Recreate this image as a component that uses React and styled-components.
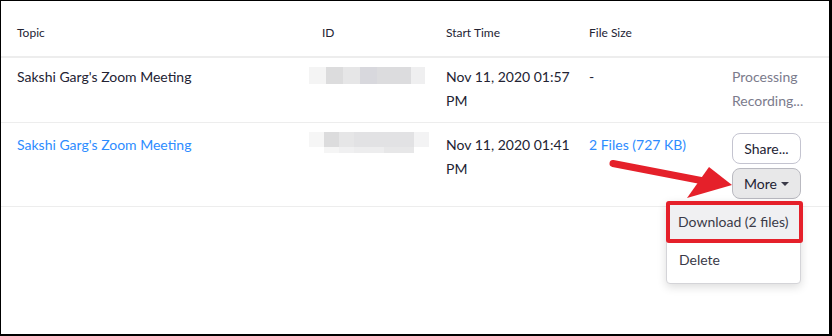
import React from 'react';
import styled, { createGlobalStyle } from 'styled-components';

const GlobalStyle = createGlobalStyle`
  body {
    margin: 0;
    background: #fff;
    font-family: Lato, "Open Sans", sans-serif;
  }
`

const Frame = styled.div`
  position: relative;
  width: 832px;
  height: 336px;
  box-sizing: border-box;
  border-style: solid;
  border-color: #000;
  border-width: 1px 3px 2px 1px;
  background: #fff;
  overflow: hidden;
`

const Row = styled.div`
  display: grid;
  grid-template-columns: 305px 124px 143px 143px 1fr;
  border-bottom: 1px solid #ededed;
`

const HeadRow = styled(Row)`
  height: 55px;
  border-bottom: 2px solid #ededed;
`

const HeadCell = styled.div`
  padding: 24px 0 0 16px;
  font-size: 12px;
  line-height: 16px;
  color: #232333;
`

const Cell = styled.div`
  padding: ${p => (p.$ready ? '10px 0 7px 16px' : '7px 0 9px 16px')};
  font-size: 14px;
  line-height: 24px;
  color: ${p => (p.$link ? '#2d8cff' : p.$muted ? '#7b7b8c' : '#232333')};
`

const Blur = styled.svg`
  display: block;
  margin: ${p => (p.$ready ? '-1px' : '2px')} 0 0 -13px;
`

const Actions = styled.div`
  display: flex;
  flex-direction: column;
  align-items: flex-start;
  gap: 4px;
`

const Button = styled.div`
  position: relative;
  box-sizing: border-box;
  width: 69px;
  height: 31px;
  display: flex;
  align-items: center;
  justify-content: center;
  gap: 4px;
  border-radius: 8px;
  border: 1px solid ${p => (p.$pressed ? '#b9b9c0' : '#c4c4d0')};
  background: ${p => (p.$pressed ? '#e8e8e9' : '#fff')};
  font-size: 14px;
  color: #232333;
`

const Caret = styled.span`
  width: 0;
  height: 0;
  border-left: 4px solid transparent;
  border-right: 4px solid transparent;
  border-top: 4px solid #3a3a48;
  margin-top: 1px;
`

const Menu = styled.div`
  position: absolute;
  top: calc(100% + 3px);
  right: -1px;
  width: 135px;
  box-sizing: border-box;
  background: #fff;
  border: 1px solid #d4d4d8;
  border-radius: 4px;
  box-shadow: 0 3px 10px rgba(0, 0, 0, 0.14);
  padding-bottom: 6px;
`

const MenuItem = styled.div`
  font-size: 14px;
  line-height: 20px;
  color: #3a3a48;
  white-space: nowrap;
  padding: ${p => (p.$hot ? '7px 8px' : '7px 12px')};
  ${p => p.$hot && `
    margin: -1px -3px 0 -1px;
    border: 4px solid #e5202a;
    border-radius: 3px;
    background: #f0f0f2;
  `}
`

const Arrow = styled.svg`
  position: absolute;
  left: 0;
  top: 0;
  pointer-events: none;
`

const rows = [
  {
    topic: "Sakshi Garg's Zoom Meeting",
    time: 'Nov 11, 2020 01:57 PM',
    size: '-',
    blur: [
      [0, 0, 17, 17, '#f4f4f4'],
      [17, 0, 17, 17, '#dcdcdd'],
      [34, 0, 17, 17, '#e6e6e7'],
      [51, 0, 17, 17, '#d8d8dd'],
      [68, 0, 34, 17, '#dcdcde'],
      [102, 0, 14, 17, '#efeff0'],
    ],
  },
  {
    topic: "Sakshi Garg's Zoom Meeting",
    time: 'Nov 11, 2020 01:41 PM',
    size: '2 Files (727 KB)',
    ready: true,
    blur: [
      [0, 0, 15, 15, '#f6f6f6'],
      [15, 0, 15, 15, '#dcdcdd'],
      [30, 0, 15, 15, '#e6e6e7'],
      [45, 0, 60, 15, '#e2e2e4'],
      [105, 0, 15, 15, '#f3f3f4'],
      [15, 15, 15, 6, '#f5f5f5'],
      [30, 15, 15, 6, '#f0f0f1'],
      [45, 15, 30, 6, '#ededee'],
      [75, 15, 30, 6, '#e7e7e8'],
    ],
  },
]

function App() {
  return (
    <Frame>
      <GlobalStyle />
      <HeadRow>
        <HeadCell>Topic</HeadCell>
        <HeadCell>ID</HeadCell>
        <HeadCell>Start Time</HeadCell>
        <HeadCell>File Size</HeadCell>
        <HeadCell />
      </HeadRow>
      {rows.map((r, i) => (
        <Row key={i}>
          <Cell $ready={r.ready} $link={r.ready}>{r.topic}</Cell>
          <Cell $ready={r.ready}>
            <Blur $ready={r.ready} width="122" height="24">
              {r.blur.map(([x, y, w, h, c], j) => (
                <rect key={j} x={x} y={y} width={w} height={h} fill={c} />
              ))}
            </Blur>
          </Cell>
          <Cell $ready={r.ready}>{r.time}</Cell>
          <Cell $ready={r.ready} $link={r.ready}>{r.size}</Cell>
          {r.ready ? (
            <Cell $ready>
              <Actions>
                <Button>Share...</Button>
                <Button $pressed>
                  More <Caret />
                  <Menu>
                    <MenuItem $hot>Download (2 files)</MenuItem>
                    <MenuItem>Delete</MenuItem>
                  </Menu>
                </Button>
              </Actions>
            </Cell>
          ) : (
            <Cell $muted>Processing Recording...</Cell>
          )}
        </Row>
      ))}
      <Arrow width="832" height="336">
        <line x1="612" y1="162.5" x2="700" y2="179.5" stroke="#e5202a" strokeWidth="7" strokeLinecap="round" />
        <polygon points="708,166 731,184 686,197" fill="#e5202a" />
      </Arrow>
    </Frame>
  );
}

export default App;
